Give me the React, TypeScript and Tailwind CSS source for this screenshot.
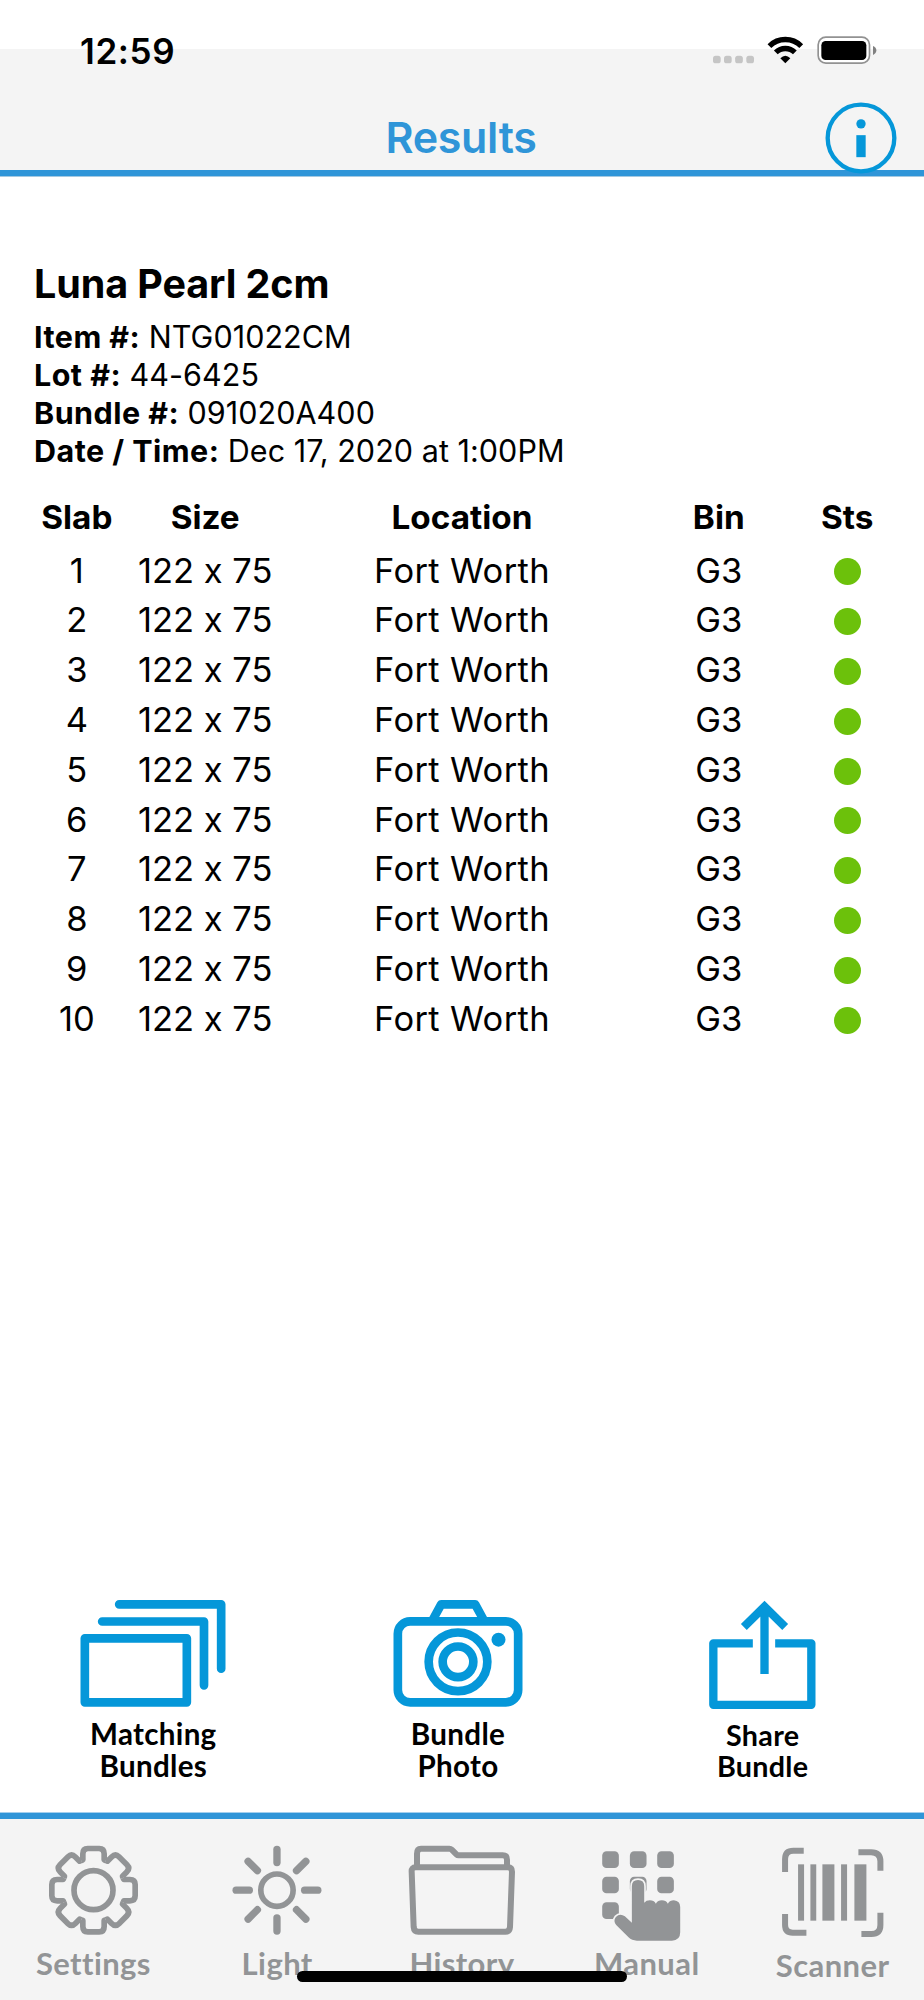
import type { ReactNode } from 'react';

const BLUE = '#0597d9';
const GRAY = '#929496';

function StatusBar() {
  return (
    <div className="absolute inset-x-0 top-0 flex h-[100px] items-center justify-between pl-[80px] pr-[46.300px]">
      <span className="pt-[2px] text-[35px] font-semibold leading-none tracking-[0.600px] text-black">12:59</span>
      <svg className="h-[34px] w-[170px]" viewBox="737 99 510 102" fill="none">
        <g fill="#c5c5c5">
          <rect x="752" y="167" width="23" height="23" rx="8" />
          <rect x="785" y="167" width="23" height="23" rx="8" />
          <rect x="818.500" y="167" width="23" height="23" rx="8" />
          <rect x="852" y="167" width="23" height="23" rx="8" />
        </g>
        <g stroke="#000" strokeWidth="16">
          <path d="M921.300 138.300A67.500 67.500 0 0 1 1016.700 138.300" />
          <path d="M940.400 157.400A40.500 40.500 0 0 1 997.600 157.400" />
        </g>
        <path d="M954 175Q969 160 984 175L969 190Z" fill="#000" />
        <rect x="1067.500" y="111.500" width="154" height="78" rx="23" fill="#fff" stroke="#929292" strokeWidth="5" />
        <rect x="1077" y="123" width="135" height="57" rx="13" fill="#000" />
        <path d="M1232 138Q1242 142 1242 151Q1242 160 1232 165Z" fill="#808080" />
      </svg>
    </div>
  );
}

function Header() {
  return (
    <header className="relative pt-[49px]">
      <div className="grid h-[121px] place-items-center bg-[#f4f4f4] pr-[2px] pt-[56px]">
        <h1 className="text-[43px] font-semibold leading-none tracking-[-0.300px] text-[#2f95d8]">Results</h1>
      </div>
      <div className="h-[7px] border-b border-[#a3c9e2] bg-[#2f95d8]" />
      <svg className="absolute right-[26px] top-[101px] h-[74px] w-[74px]" viewBox="1087.500 301.500 222 222">
        <circle cx="1198.500" cy="412.500" r="100" fill="none" stroke={BLUE} strokeWidth="13" />
        <circle cx="1198.500" cy="370" r="14" fill={BLUE} />
        <rect x="1184.500" y="404" width="28" height="66" fill={BLUE} />
      </svg>
      <StatusBar />
    </header>
  );
}

const details = [
  ['Item #:', 'NTG01022CM'],
  ['Lot #:', '44-6425'],
  ['Bundle #:', '091020A400'],
  ['Date / Time:', 'Dec 17, 2020 at 1:00PM'],
];

const slabs = Array.from({ length: 10 }, (_, i) => ({
  slab: i + 1,
  size: '122 x 75',
  location: 'Fort Worth',
  bin: 'G3',
}));

function SlabTable() {
  return (
    <div className="mt-[22px]">
      <div className="grid h-[50px] grid-cols-[10%_20%_40%_20%_10%] place-items-center pt-[2px] text-[33.300px] font-bold leading-none">
        {['Slab', 'Size', 'Location', 'Bin', 'Sts'].map((h) => (
          <span key={h}>{h}</span>
        ))}
      </div>
      <div className="mt-[3px]">
        {slabs.map((s) => (
          <div
            key={s.slab}
            className="grid h-[49.8px] grid-cols-[10%_20%_40%_20%_10%] place-items-center pt-[2px] text-[34.500px] leading-none"
          >
            <span>{s.slab}</span>
            <span className="[font-feature-settings:'calt'_0]">{s.size}</span>
            <span className="tracking-[0.350px]">{s.location}</span>
            <span>{s.bin}</span>
            <span className="ml-px mt-[2px] size-[27px] rounded-full bg-[#6cc10b]" />
          </div>
        ))}
      </div>
    </div>
  );
}

function MatchingIcon() {
  return (
    <svg className="h-[110px] w-[150px]" viewBox="52.500 60 450 330" fill="none" stroke={BLUE} strokeWidth="26" strokeLinejoin="round" strokeLinecap="round">
      <rect x="73" y="175" width="306" height="192" />
      <path d="M125 124.500H430.500V316M176 73H482V266" />
    </svg>
  );
}

function CameraIcon() {
  return (
    <svg className="h-[110px] w-[150px]" viewBox="37.500 60 450 330" fill="none" stroke={BLUE} strokeWidth="26" strokeLinejoin="round">
      <rect x="82" y="124" width="361" height="243" rx="37" />
      <path d="M188 117L212 73H314L338 117" />
      <circle cx="262.500" cy="245.500" r="88" />
      <circle cx="262.500" cy="245.500" r="46" />
      <circle cx="384" cy="179" r="21" fill={BLUE} stroke="none" />
    </svg>
  );
}

function ShareIcon() {
  return (
    <svg className="h-[110px] w-[150px]" viewBox="953.500 60 450 330" fill="none" stroke={BLUE} strokeWidth="25">
      <path d="M1148 190H1029.500V374.500H1323.500V190H1215" strokeLinejoin="round" />
      <path d="M1183 282V85M1121 141L1183 80L1245 141" />
    </svg>
  );
}

function Action({ icon, lines, className }: { icon: ReactNode; lines: [string, string]; className: string }) {
  return (
    <button className="flex flex-col items-center">
      {icon}
      <span className={className}>
        {lines[0]}
        <br />
        {lines[1]}
      </span>
    </button>
  );
}

function SettingsIcon() {
  return (
    <svg className="h-[100px] w-[120px]" viewBox="97 130 360 300" fill="none" stroke={GRAY} strokeWidth="17">
      <g transform="translate(281.500 271.500)" strokeLinejoin="round">
        {[0, 45, 90, 135, 180, 225, 270, 315].map((a) => (
          <path key={a} transform={`rotate(${a})`} d="M-37 -89L-32 -91V-109Q-32 -125 -17 -125H17Q32 -125 32 -109V-91L37 -89" />
        ))}
        <circle r="58.500" />
      </g>
    </svg>
  );
}

function LightIcon() {
  return (
    <svg className="h-[100px] w-[120px]" viewBox="651.600 130 360 300" fill="none" stroke={GRAY}>
      <g transform="translate(831.500 271.500)">
        <circle r="48.500" strokeWidth="17" />
        {[0, 45, 90, 135, 180, 225, 270, 315].map((a) => (
          <path key={a} transform={`rotate(${a})`} d="M0 -83V-122.500" strokeWidth="22" strokeLinecap="round" />
        ))}
      </g>
    </svg>
  );
}

function HistoryIcon() {
  return (
    <svg className="h-[100px] w-[120px]" viewBox="246 130 360 300" fill="none" stroke={GRAY} strokeWidth="18">
      <path d="M287 203H563Q576 203 576 216L570 382Q569 396 556 396H295Q282 396 281 382L275 216Q274 203 287 203Z" />
      <path d="M291 200V162Q291 147 303 147H388Q392 147 395 150L410 165Q412 167 416 167H548Q561 167 561 180V200" />
    </svg>
  );
}

const keys = [[66, 155], [149, 155], [231, 155], [66, 231], [149, 231], [231, 231], [66, 308]];

function ManualIcon() {
  return (
    <svg className="h-[100px] w-[120px]" viewBox="20.400 130 360 300" fill={GRAY}>
      {keys.map(([x, y]) => (
        <rect key={`${x}-${y}`} x={x} y={y} width="50" height="50" rx="13" />
      ))}
      <path
        d="M155 369V260Q155 241 173.500 241T192 260V309Q198 302 209 302Q221 302 227 312Q233 302 245 302Q257 302 263 312Q269 302 281 302Q300 304 300 322V398Q300 423 275 423H170Q155 423 145 413L108 376Q98 364 107 352Q119 340 134 350Z"
        stroke="#f4f4f4"
        strokeWidth="10"
        paintOrder="stroke"
      />
    </svg>
  );
}

function ScannerIcon() {
  return (
    <svg className="h-[100px] w-[120px]" viewBox="574.800 130 360 300" fill="none" stroke={GRAY} strokeWidth="18">
      <path d="M614 217V178Q614 153 639 153H670M834 157.500H872Q900 157.500 900 185V213M614 343V376Q614 399 637 399H678M900 339V376Q900 403 873 403H843" />
      <g fill={GRAY} stroke="none">
        <rect x="653" y="194" width="18" height="169" />
        <rect x="690" y="194" width="17.500" height="169" />
        <rect x="726" y="194" width="36" height="169" />
        <rect x="782" y="194" width="18" height="169" />
        <rect x="822" y="194" width="36" height="169" />
      </g>
    </svg>
  );
}

function Tab({ icon, label, className }: { icon: ReactNode; label: string; className: string }) {
  return (
    <button className="flex flex-col items-center">
      {icon}
      <span className={className}>{label}</span>
    </button>
  );
}

export default function App() {
  return (
    <div className="relative flex h-[2000px] w-[924px] flex-col overflow-hidden bg-white font-['Inter',sans-serif] text-black">
      <Header />
      <main className="flex-1 px-[34px] pt-[83px]">
        <h2 className="text-[39.500px] font-bold leading-[48px] tracking-[-0.100px]">Luna Pearl 2cm</h2>
        <dl className="mt-[10px] text-[30.500px] leading-[38px]">
          {details.map(([k, v]) => (
            <div key={k} className="flex gap-[8.500px]">
              <dt className="font-bold tracking-[0.450px]">{k}</dt>
              <dd className="font-normal tracking-[0.050px]">{v}</dd>
            </div>
          ))}
        </dl>
        <SlabTable />
      </main>
      <section className="grid h-[212px] w-[915px] grid-cols-3 items-start pl-px font-['Lato',sans-serif] font-bold tracking-[0.300px]">
        <Action icon={<MatchingIcon />} lines={['Matching', 'Bundles']} className="mt-[8px] text-[29.600px] leading-[32px]" />
        <Action icon={<CameraIcon />} lines={['Bundle', 'Photo']} className="mt-[8px] text-[29.600px] leading-[32px]" />
        <Action icon={<ShareIcon />} lines={['Share', 'Bundle']} className="mt-[10px] text-[28.700px] leading-[31px]" />
      </section>
      <div className="h-px bg-[#a3cfee]" />
      <nav className="h-[187px] border-t-[6px] border-[#2f95d8] bg-[#f4f4f4] pt-[24.300px] font-['Lato',sans-serif] text-[31px] font-bold leading-[36px] tracking-[0.400px] text-[#929496]">
        <div className="grid grid-cols-5 items-start">
          <Tab icon={<SettingsIcon />} label="Settings" className="mt-[2px] pl-[2px]" />
          <Tab icon={<LightIcon />} label="Light" className="mt-[2px]" />
          <Tab icon={<HistoryIcon />} label="History" className="mt-[2px]" />
          <Tab icon={<ManualIcon />} label="Manual" className="mt-[2px]" />
          <Tab icon={<ScannerIcon />} label="Scanner" className="mt-[4px] pl-[2px]" />
        </div>
      </nav>
      <div className="absolute bottom-[18px] left-[297px] h-[11px] w-[330px] rounded-full bg-black" />
    </div>
  );
}
